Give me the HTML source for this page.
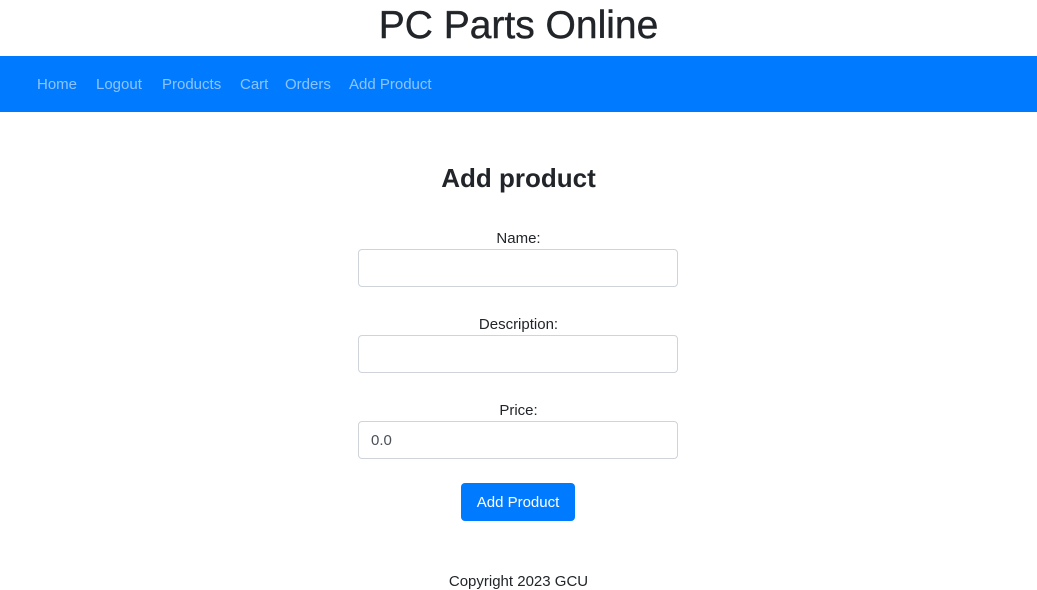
<!DOCTYPE html>
<html><head><style>
body{margin:0;width:1037px;height:590px;position:relative;font-family:"Liberation Sans",sans-serif;color:#212529;background:#fff;overflow:hidden}
.a{position:absolute;white-space:nowrap}
.c{left:0;width:1037px;text-align:center}
nav{position:absolute;left:0;top:56px;width:1037px;height:56px;background:#007bff}
nav span{position:absolute;top:20px;font-size:15px;color:rgba(255,255,255,.55)}
.in{position:absolute;left:358px;width:318px;height:36px;border:1px solid #ced4da;border-radius:4px;background:#fff}
.lb{font-size:15px}
</style></head><body>
<div class="a c" style="top:4px;font-size:39px;line-height:44px;-webkit-text-stroke:0.4px #212529">PC Parts Online</div>
<nav>
<span style="left:37px">Home</span><span style="left:96px">Logout</span><span style="left:162px">Products</span><span style="left:240px">Cart</span><span style="left:285px">Orders</span><span style="left:349px">Add Product</span>
</nav>
<div class="a c" style="top:162px;font-size:26px;font-weight:bold;line-height:32px">Add product</div>
<div class="a c lb" style="top:230px">Name:</div>
<div class="in" style="top:249px"></div>
<div class="a c lb" style="top:316px">Description:</div>
<div class="in" style="top:335px"></div>
<div class="a c lb" style="top:402px">Price:</div>
<div class="in" style="top:421px"><span class="a" style="left:12px;top:10px;font-size:15px;color:#495057">0.0</span></div>
<div class="a" style="left:461px;top:483px;width:114px;height:38px;background:#007bff;border-radius:4px;color:#fff;font-size:15px;line-height:40px;text-align:center">Add Product</div>
<div class="a c" style="top:573px;font-size:15px">Copyright 2023 GCU</div>
</body></html>
